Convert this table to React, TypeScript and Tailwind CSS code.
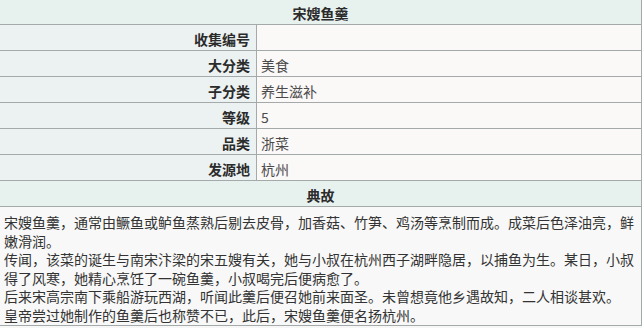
const rows: [string, string][] = [
  ["收集编号", ""],
  ["大分类", "美食"],
  ["子分类", "养生滋补"],
  ["等级", "5"],
  ["品类", "浙菜"],
  ["发源地", "杭州"],
];

const story = [
  "宋嫂鱼羹，通常由鳜鱼或鲈鱼蒸熟后剔去皮骨，加香菇、竹笋、鸡汤等烹制而成。成菜后色泽油亮，鲜嫩滑润。",
  "传闻，该菜的诞生与南宋汴梁的宋五嫂有关，她与小叔在杭州西子湖畔隐居，以捕鱼为生。某日，小叔得了风寒，她精心烹饪了一碗鱼羹，小叔喝完后便病愈了。",
  "后来宋高宗南下乘船游玩西湖，听闻此羹后便召她前来面圣。未曾想竟他乡遇故知，二人相谈甚欢。",
  "皇帝尝过她制作的鱼羹后也称赞不已，此后，宋嫂鱼羹便名扬杭州。",
];

export default function App() {
  return (
    <div className="w-[642px] h-[328px] overflow-hidden bg-[#f7f7f7] text-[14px] text-[#2b2b2b] font-['Microsoft_YaHei','Noto_Sans_CJK_SC',sans-serif]">
      <div className="border-r border-[#a3aaa9]">
        {/* title */}
        <div className="h-[25px] border-b border-[#a3aaa9] bg-[#e7f1ee] flex items-center justify-center font-bold leading-none pt-[1px]">
          宋嫂鱼羹
        </div>

        {rows.map(([label, value]) => (
          <div
            key={label}
            className="h-[26px] grid grid-cols-[257px_1fr] border-b border-[#a3aaa9]"
          >
            <div className="bg-[#ecf2f1] border-r border-[#a3aaa9] flex items-center justify-end pr-[6px] pt-[2px] font-bold leading-none">
              {label}
            </div>
            <div className="bg-[#fbf8f8] flex items-center pl-[4px] pt-[2px] leading-none text-[#4a4a4a]">
              {value}
            </div>
          </div>
        ))}

        {/* story header */}
        <div className="h-[26px] border-b border-[#a3aaa9] bg-[#e7f1ee] flex items-center justify-center font-bold leading-none pt-[2px]">
          典故
        </div>

        <div className="h-[119px] border-b border-[#a3aaa9] bg-[#f8f8f8] px-[4px] pt-[6px] leading-[18.5px] text-[#333]">
          {story.map((p, i) => (
            <p key={i}>{p}</p>
          ))}
        </div>
      </div>
    </div>
  );
}
